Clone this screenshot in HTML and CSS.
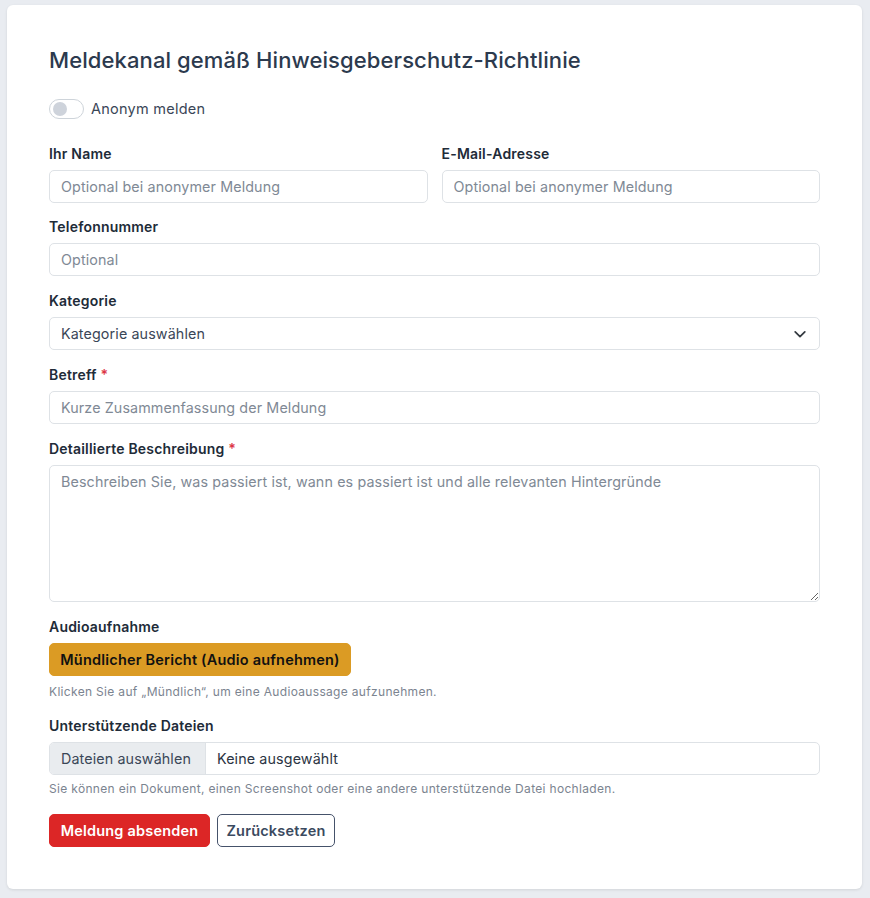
FILE: index.html
```html
<!DOCTYPE html>
<html lang="de">
<head>
<meta charset="utf-8">
<title>Meldekanal</title>
<link rel="stylesheet" href="styles.css">
</head>
<body>
<div class="card">
  <h1 class="title">Meldekanal gemäß Hinweisgeberschutz-Richtlinie</h1>

  <div class="toggle-row">
    <span class="switch"><span class="knob"></span></span>
    <span class="toggle-label">Anonym melden</span>
  </div>

  <div class="row">
    <div class="group">
      <label class="label">Ihr Name</label>
      <input class="control" type="text" placeholder="Optional bei anonymer Meldung">
    </div>
    <div class="group">
      <label class="label">E-Mail-Adresse</label>
      <input class="control" type="text" placeholder="Optional bei anonymer Meldung">
    </div>
  </div>

  <div class="group">
    <label class="label">Telefonnummer</label>
    <input class="control" type="text" placeholder="Optional">
  </div>

  <div class="group">
    <label class="label">Kategorie</label>
    <div class="select-wrap">
      <select class="control select">
        <option>Kategorie auswählen</option>
      </select>
      <svg class="chevron" width="14" height="14" viewBox="0 0 16 16"><path d="M2.5 5.5 L8 11 L13.5 5.5" fill="none" stroke="#343a40" stroke-width="2" stroke-linecap="round" stroke-linejoin="round"/></svg>
    </div>
  </div>

  <div class="group">
    <label class="label">Betreff <span class="req">*</span></label>
    <input class="control" type="text" placeholder="Kurze Zusammenfassung der Meldung">
  </div>

  <div class="group">
    <label class="label">Detaillierte Beschreibung <span class="req">*</span></label>
    <textarea class="control area" placeholder="Beschreiben Sie, was passiert ist, wann es passiert ist und alle relevanten Hintergründe"></textarea>
  </div>

  <div class="group">
    <label class="label">Audioaufnahme</label>
    <div><button class="btn btn-audio" type="button">Mündlicher Bericht (Audio aufnehmen)</button></div>
    <div class="hint">Klicken Sie auf „Mündlich“, um eine Audioaussage aufzunehmen.</div>
  </div>

  <div class="group">
    <label class="label">Unterstützende Dateien</label>
    <div class="file">
      <span class="file-btn">Dateien auswählen</span>
      <span class="file-name">Keine ausgewählt</span>
    </div>
    <div class="hint hint-file">Sie können ein Dokument, einen Screenshot oder eine andere unterstützende Datei hochladen.</div>
  </div>

  <div class="actions">
    <button class="btn btn-submit" type="button">Meldung absenden</button>
    <button class="btn btn-reset" type="button">Zurücksetzen</button>
  </div>
</div>
</body>
</html>
```

FILE: styles.css
```css
* { box-sizing: border-box; }
html, body { height: 100%; }
body {
  margin: 0;
  padding: 5px 8px 9px 7px;
  background: #e9ecf1;
  font-family: "Inter", "Open Sans", sans-serif;
  color: #212529;
}
.card {
  background: #fff;
  border-radius: 6px;
  box-shadow: 0 1px 3px rgba(0,0,0,0.10);
  padding: 42px 42px 42px 42px;
  width: 855px;
}
.title {
  margin: 0 0 25px;
  font-size: 22px;
  letter-spacing: 0.1px;
  line-height: 26px;
  font-weight: 500;
  color: #2c3a4e;
}
.toggle-row {
  display: flex;
  align-items: center;
  gap: 7px;
  height: 21px;
  margin-bottom: 24px;
}
.switch {
  width: 35px;
  height: 20px;
  border: 1px solid #ced4da;
  border-radius: 10px;
  display: flex;
  align-items: center;
  padding-left: 3px;
}
.knob {
  width: 14px;
  height: 14px;
  border-radius: 50%;
  background: #ced3db;
}
.toggle-label {
  font-size: 14.5px;
  letter-spacing: 0.25px;
  color: #3a4657;
}
.row {
  display: grid;
  grid-template-columns: 1fr 1fr;
  column-gap: 14px;
}
.row .group { margin-bottom: 13px; }
.group {
  display: flex;
  flex-direction: column;
  margin-bottom: 14px;
}
.label {
  font-size: 14px;
  letter-spacing: 0.2px;
  line-height: 21px;
  font-weight: 600;
  color: #212b38;
  margin-bottom: 6px;
}
.req { color: #dc3545; }
.control {
  width: 100%;
  height: 33px;
  border: 1px solid #dee2e6;
  border-radius: 5px;
  padding: 0 11px;
  font-family: inherit;
  font-size: 14.3px;
  letter-spacing: 0.12px;
  color: #374151;
  background: #fff;
  outline: none;
}
.control::placeholder { color: #808995; }
.select-wrap { position: relative; }
.select {
  appearance: none;
  -webkit-appearance: none;
  color: #3a4657;
}
.chevron {
  position: absolute;
  right: 13px;
  top: 10px;
}
.area {
  height: 137px;
  padding: 5px 11px;
  resize: vertical;
  line-height: 21px;
}
.btn {
  font-family: inherit;
  font-size: 14.5px;
  letter-spacing: 0.2px;
  font-weight: 600;
  height: 33px;
  border-radius: 5px;
  padding: 0 8px;
  cursor: pointer;
}
.btn-audio {
  background: #db9b24;
  border: 1px solid #db9b24;
  color: #111;
  width: 302px;
}
.hint {
  margin-top: 7px;
  font-size: 12px;
  letter-spacing: 0.32px;
  line-height: 18px;
  color: #7b8490;
}
.hint-file { margin-top: 5px; margin-bottom: 2px; }
.file {
  display: flex;
  height: 33px;
  border: 1px solid #dee2e6;
  border-radius: 5px;
  overflow: hidden;
  font-size: 14.3px;
  letter-spacing: 0.12px;
}
.file-btn {
  display: flex;
  align-items: center;
  padding: 0 11px;
  background: #e9ecef;
  border-right: 1px solid #dee2e6;
  color: #3a4657;
  width: 156px;
}
.file-name {
  display: flex;
  align-items: center;
  padding: 0 11px;
  color: #2b3443;
}
.actions {
  display: flex;
  gap: 7px;
}
.btn-submit {
  background: #dc2626;
  border: 1px solid #dc2626;
  color: #fff;
  width: 161px;
}
.btn-reset {
  background: #fff;
  border: 1px solid #45526a;
  color: #3b4a60;
  width: 118px;
}
```
